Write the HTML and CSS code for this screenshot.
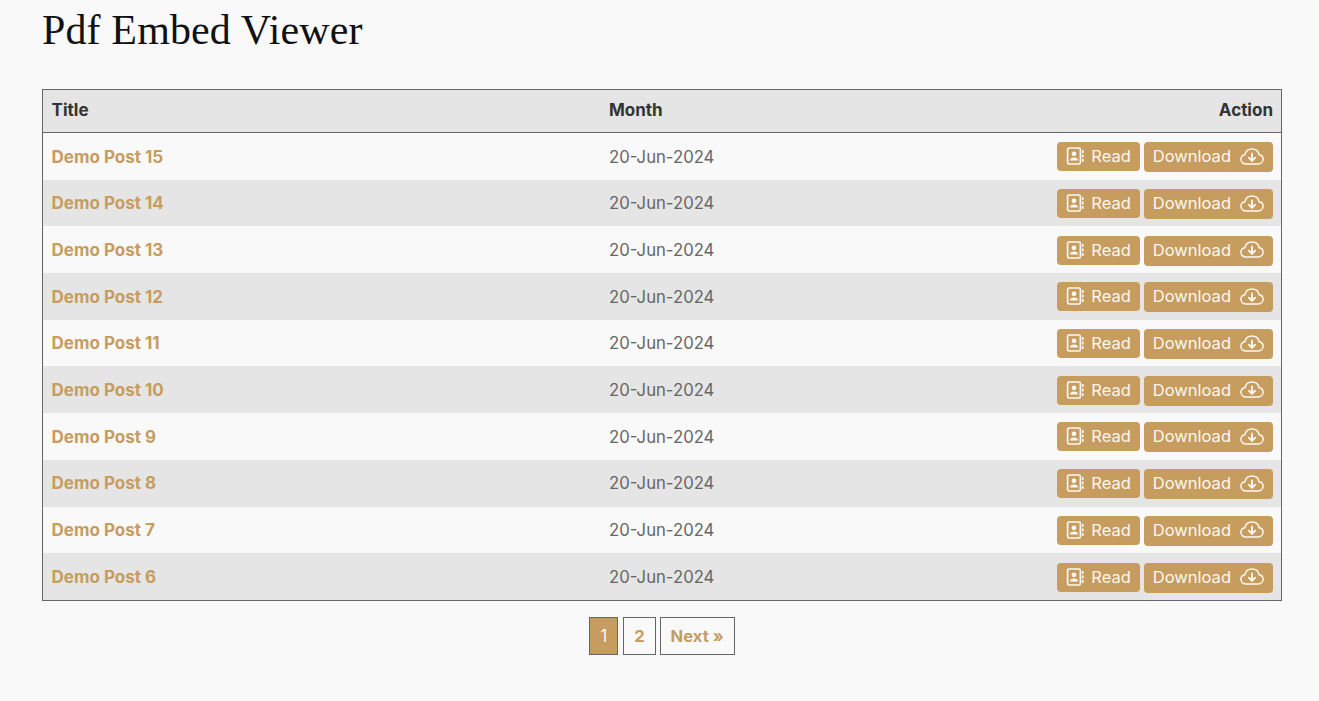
FILE: index.html
```html
<!DOCTYPE html>
<html lang="en">
<head>
<meta charset="utf-8">
<title>Pdf Embed Viewer</title>
<link rel="stylesheet" href="styles.css">
</head>
<body>
<main class="page">
<h1 class="title">Pdf Embed Viewer</h1>
<table class="posts">
<thead><tr><th class="c-title">Title</th><th class="c-month">Month</th><th class="c-action">Action</th></tr></thead>
<tbody id="rows">
<tr><td><a class="post" href="#">Demo Post 15</a></td><td class="date">20-Jun-2024</td><td class="c-action"><div class="actions"><a class="btn" href="#"><svg class="ic-read" viewBox="0 0 18 18"><use href="#book"/></svg>Read</a><a class="btn dl" href="#">Download<svg class="ic-dl" viewBox="0 0 24 17"><use href="#cloud"/></svg></a></div></td></tr>
<tr><td><a class="post" href="#">Demo Post 14</a></td><td class="date">20-Jun-2024</td><td class="c-action"><div class="actions"><a class="btn" href="#"><svg class="ic-read" viewBox="0 0 18 18"><use href="#book"/></svg>Read</a><a class="btn dl" href="#">Download<svg class="ic-dl" viewBox="0 0 24 17"><use href="#cloud"/></svg></a></div></td></tr>
<tr><td><a class="post" href="#">Demo Post 13</a></td><td class="date">20-Jun-2024</td><td class="c-action"><div class="actions"><a class="btn" href="#"><svg class="ic-read" viewBox="0 0 18 18"><use href="#book"/></svg>Read</a><a class="btn dl" href="#">Download<svg class="ic-dl" viewBox="0 0 24 17"><use href="#cloud"/></svg></a></div></td></tr>
<tr><td><a class="post" href="#">Demo Post 12</a></td><td class="date">20-Jun-2024</td><td class="c-action"><div class="actions"><a class="btn" href="#"><svg class="ic-read" viewBox="0 0 18 18"><use href="#book"/></svg>Read</a><a class="btn dl" href="#">Download<svg class="ic-dl" viewBox="0 0 24 17"><use href="#cloud"/></svg></a></div></td></tr>
<tr><td><a class="post" href="#">Demo Post 11</a></td><td class="date">20-Jun-2024</td><td class="c-action"><div class="actions"><a class="btn" href="#"><svg class="ic-read" viewBox="0 0 18 18"><use href="#book"/></svg>Read</a><a class="btn dl" href="#">Download<svg class="ic-dl" viewBox="0 0 24 17"><use href="#cloud"/></svg></a></div></td></tr>
<tr><td><a class="post" href="#">Demo Post 10</a></td><td class="date">20-Jun-2024</td><td class="c-action"><div class="actions"><a class="btn" href="#"><svg class="ic-read" viewBox="0 0 18 18"><use href="#book"/></svg>Read</a><a class="btn dl" href="#">Download<svg class="ic-dl" viewBox="0 0 24 17"><use href="#cloud"/></svg></a></div></td></tr>
<tr><td><a class="post" href="#">Demo Post 9</a></td><td class="date">20-Jun-2024</td><td class="c-action"><div class="actions"><a class="btn" href="#"><svg class="ic-read" viewBox="0 0 18 18"><use href="#book"/></svg>Read</a><a class="btn dl" href="#">Download<svg class="ic-dl" viewBox="0 0 24 17"><use href="#cloud"/></svg></a></div></td></tr>
<tr><td><a class="post" href="#">Demo Post 8</a></td><td class="date">20-Jun-2024</td><td class="c-action"><div class="actions"><a class="btn" href="#"><svg class="ic-read" viewBox="0 0 18 18"><use href="#book"/></svg>Read</a><a class="btn dl" href="#">Download<svg class="ic-dl" viewBox="0 0 24 17"><use href="#cloud"/></svg></a></div></td></tr>
<tr><td><a class="post" href="#">Demo Post 7</a></td><td class="date">20-Jun-2024</td><td class="c-action"><div class="actions"><a class="btn" href="#"><svg class="ic-read" viewBox="0 0 18 18"><use href="#book"/></svg>Read</a><a class="btn dl" href="#">Download<svg class="ic-dl" viewBox="0 0 24 17"><use href="#cloud"/></svg></a></div></td></tr>
<tr><td><a class="post" href="#">Demo Post 6</a></td><td class="date">20-Jun-2024</td><td class="c-action"><div class="actions"><a class="btn" href="#"><svg class="ic-read" viewBox="0 0 18 18"><use href="#book"/></svg>Read</a><a class="btn dl" href="#">Download<svg class="ic-dl" viewBox="0 0 24 17"><use href="#cloud"/></svg></a></div></td></tr>
</tbody>
</table>
<nav class="pager">
<span class="pg current">1</span><a class="pg" href="#">2</a><a class="pg" href="#">Next »</a>
</nav>
</main>
<svg class="defs" aria-hidden="true">
<symbol id="book" viewBox="0 0 18 18">
<rect x="1.6" y="1" width="12.8" height="16" rx="1.6" fill="none" stroke="currentColor" stroke-width="1.7"/>
<circle cx="8" cy="6.800" r="2.400" fill="currentColor"/>
<path d="M4 13.600c0-2.200 1.500-3.200 4-3.200s4 1 4 3.200z" fill="currentColor"/>
<path d="M16 3h1.600v3H16zM16 7.500h1.600v3H16zM16 12h1.600v3H16z" fill="currentColor"/>
</symbol>
<symbol id="cloud" viewBox="0 0 24 17">
<path d="M6 15.900C3 15.900.9 13.900.9 11.300c0-2.400 1.800-4.200 4-4.500C5.600 3.300 8.500 1 12 1c3.700 0 6.500 2.500 7.100 5.800 2.300.3 4 2.200 4 4.500 0 2.600-2.100 4.600-4.800 4.600z" fill="none" stroke="currentColor" stroke-width="1.500" stroke-linejoin="round"/>
<path d="M12 5.500v7.200M8.800 9.700 12 12.900l3.200-3.200" fill="none" stroke="currentColor" stroke-width="1.900" stroke-linecap="round" stroke-linejoin="round"/>
</symbol>
</svg>
</body>
</html>
```
FILE: styles.css
```css
* { box-sizing: border-box; }
html, body { margin: 0; padding: 0; }
body { background: #f9f9f9; font-family: Inter, "Liberation Sans", sans-serif; font-size: 16.7px; color: #333; }
.page { padding: 0 37px 0 42px; }
.title { margin: 0; padding-top: 7px; height: 89px; font-family: "Liberation Serif", serif; font-weight: 400; font-size: 42px; line-height: 46px; letter-spacing: .13px; color: #111; }
.posts { width: 100%; border-collapse: separate; border-spacing: 0; border: 1px solid #666; table-layout: fixed; }
.posts th { height: 43px; padding: 0 8px 2px 8.600px; background: #e5e5e5; border-bottom: 1px solid #666; font-size: 17px; font-weight: 650; text-align: left; color: #333; }
.posts td { height: 46.7px; padding: .4px 8px 0 8.600px; color: #666; }
.posts .c-title { width: 557px; }
.posts .c-month { width: 330px; padding-left: 9px; }
.posts .date { padding-left: 9px; }
.posts .c-action { text-align: right; }
.posts td.c-action { padding-top: 2px; }
.posts tbody tr:nth-child(even) td { background: #e5e5e5; }
.post { color: #c69c5f; font-size: 17px; font-weight: 700; text-decoration: none; }
.actions { display: flex; justify-content: flex-end; align-items: flex-start; gap: 4px; }
.btn { display: flex; align-items: center; height: 29px; padding: 0 9px 1px; background: #c69c5f; border-radius: 4px; font-size: 16.5px; color: #fbf7f0; text-decoration: none; white-space: nowrap; }
.dl { height: 30px; padding-bottom: 2px; }
.ic-read { width: 18px; height: 18px; margin-right: 7px; }
.ic-dl { width: 24px; height: 17px; margin-left: 9px; }
.pager { display: flex; justify-content: center; gap: 4px; margin-top: 16px; }
.pg { display: flex; align-items: center; height: 38px; padding: 0 10px; border: 1px solid #666; font-size: 16.600px; color: #c69c5f; font-weight: 650; text-decoration: none; }
.current { margin-right: 1px; background: #c69c5f; color: #fbf7f0; font-weight: 400; }
.defs { position: absolute; width: 0; height: 0; }
```
